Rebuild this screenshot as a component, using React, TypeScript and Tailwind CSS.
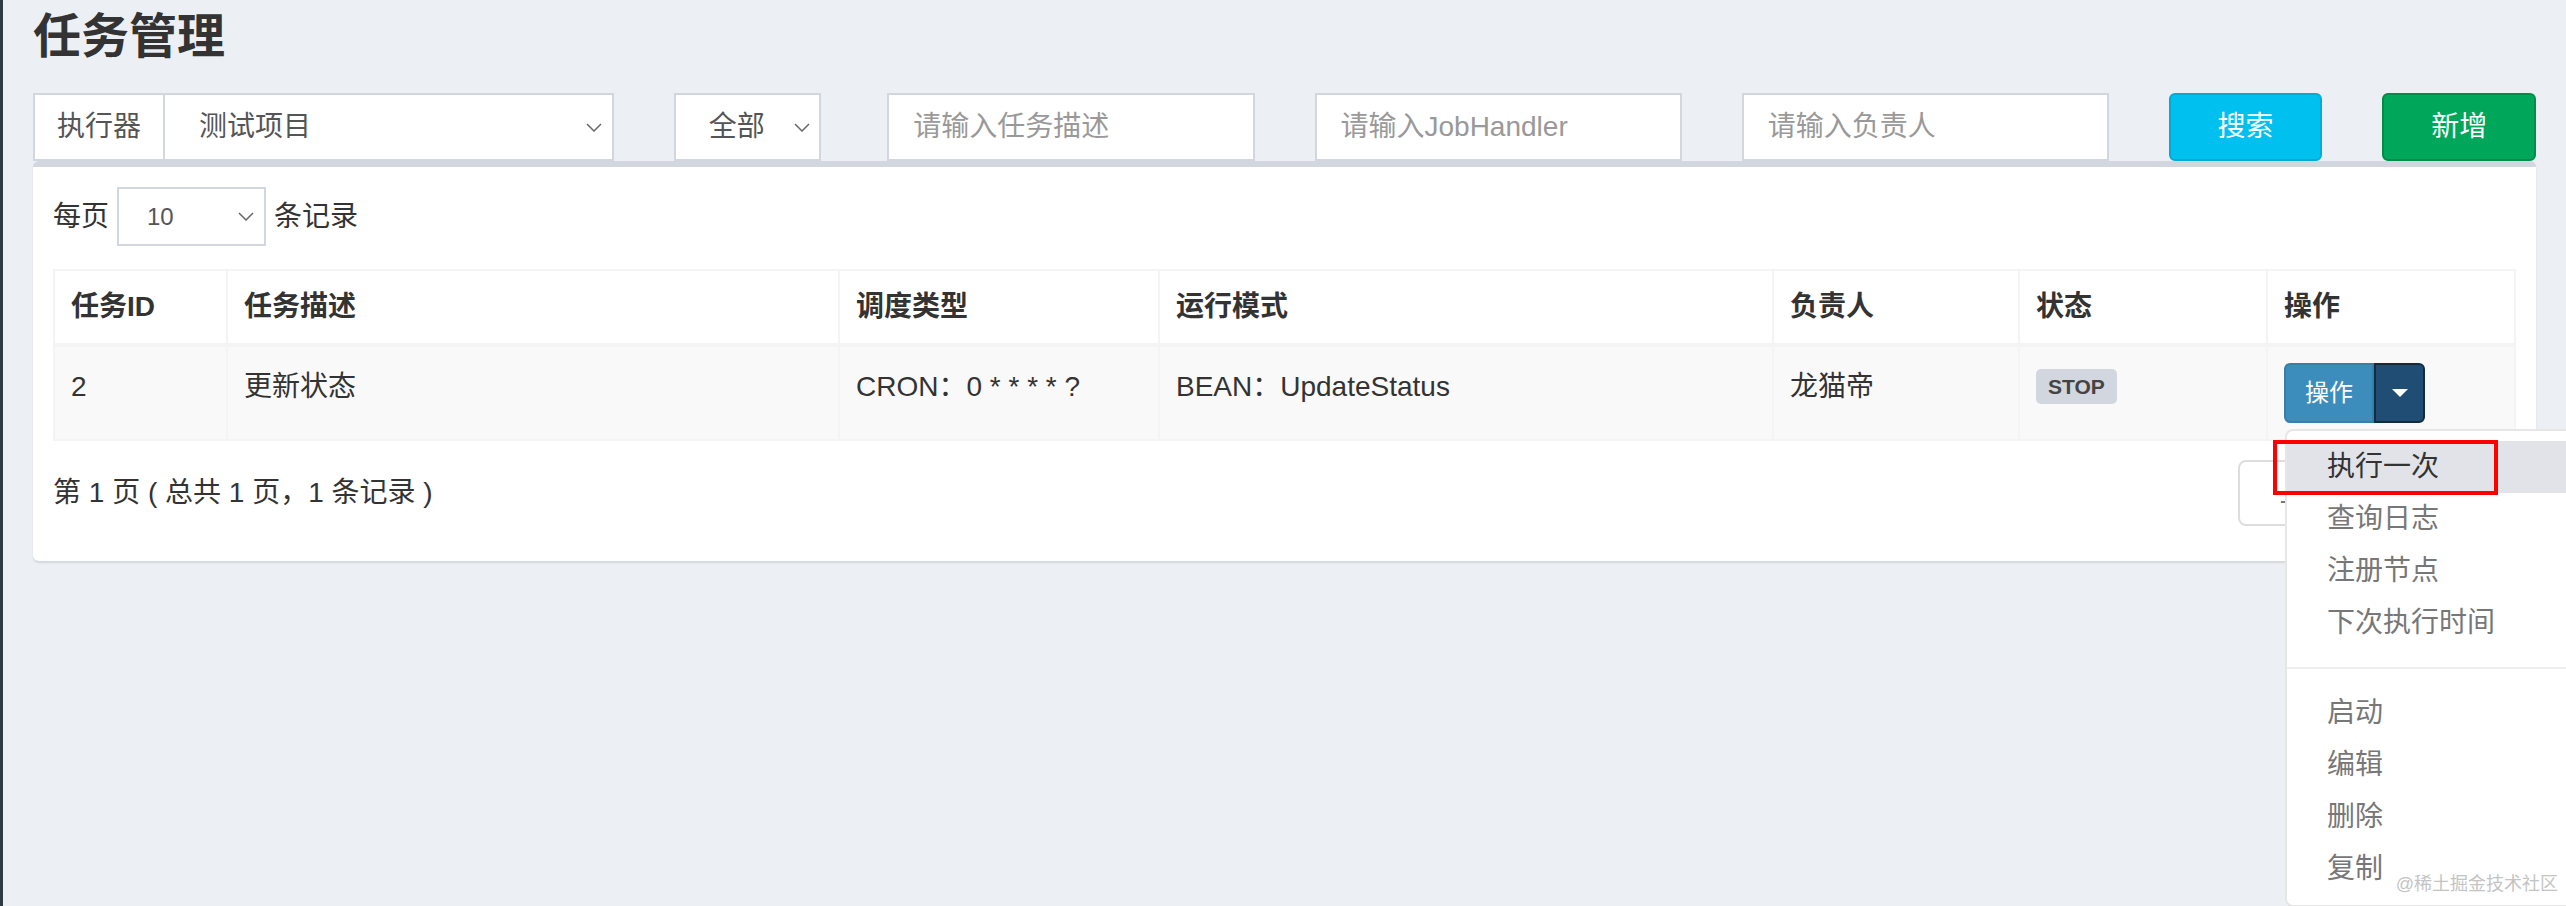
import React from 'react';

const columns = [
  { title: '任务ID', width: 'w-[173px]' },
  { title: '任务描述', width: 'w-[612px]' },
  { title: '调度类型', width: 'w-[320px]' },
  { title: '运行模式', width: 'w-[614px]' },
  { title: '负责人', width: 'w-[246px]' },
  { title: '状态', width: 'w-[248px]' },
  { title: '操作', width: 'w-[248px]' },
];

const menuTop = ['执行一次', '查询日志', '注册节点', '下次执行时间'];
const menuBottom = ['启动', '编辑', '删除', '复制'];

function Chevron() {
  return (
    <svg width="16" height="9" viewBox="0 0 16 9" className="shrink-0">
      <path d="M1 1 L8 8 L15 1" fill="none" stroke="#666" strokeWidth="1.5" />
    </svg>
  );
}

export default function App() {
  return (
    <div className="relative flex h-[906px] w-[2566px] overflow-hidden bg-[#ecf0f5] font-['Liberation_Sans','Noto_Sans_CJK_SC',sans-serif] text-[28px] text-[#333]">
      {/* sidebar edge */}
      <div className="w-[3px] shrink-0 bg-[#2f3a42]" />

      <div className="min-w-0 flex-1">
        <h1 className="pl-[30px] pt-[10px] text-[48px] font-semibold leading-[53px] text-[#333]">任务管理</h1>

        <section className="mt-[30px] px-[30px]">
          {/* Filters */}
          <div className="grid grid-cols-12 gap-x-[60px]">
            <div className="col-span-3 flex h-[68px]">
              <div className="flex w-[132px] shrink-0 items-center justify-center border-2 border-[#d2d6de] bg-white text-[#555]">执行器</div>
              <div className="flex flex-1 items-center justify-between border-2 border-l-0 border-[#d2d6de] bg-white pl-[34px] pr-[10px] text-[#555]">
                <span>测试项目</span>
                <Chevron />
              </div>
            </div>
            <div className="col-span-1">
              <div className="flex h-[68px] w-[147px] items-center justify-between border-2 border-[#d2d6de] bg-white pl-[33px] pr-[9px] text-[#555]">
                <span>全部</span>
                <Chevron />
              </div>
            </div>
            <div className="col-span-2 flex h-[68px] items-center border-2 border-[#d2d6de] bg-white px-[24px] text-[#999]">请输入任务描述</div>
            <div className="col-span-2 flex h-[68px] items-center border-2 border-[#d2d6de] bg-white px-[24px] text-[#999]">请输入JobHandler</div>
            <div className="col-span-2 flex h-[68px] items-center border-2 border-[#d2d6de] bg-white px-[24px] text-[#999]">请输入负责人</div>
            <button className="col-span-1 h-[68px] rounded-[6px] border-2 border-[#00acd6] bg-[#00c0ef] text-white">搜索</button>
            <button className="col-span-1 h-[68px] rounded-[6px] border-2 border-[#008d4c] bg-[#00a65a] text-white">新增</button>
          </div>

          {/* Box */}
          <div className="rounded-[6px] border-t-[6px] border-[#d2d6de] bg-white px-[20px] pb-[35px] pt-[20px] shadow-[0_2px_2px_rgba(0,0,0,0.1)]">
            <div className="flex h-[59px] items-center">
              <span>每页</span>
              <div className="mx-[8px] flex h-[59px] w-[149px] items-center justify-between border-2 border-[#d2d6de] pl-[28px] pr-[10px] text-[24px] text-[#555]">
                <span>10</span>
                <Chevron />
              </div>
              <span>条记录</span>
            </div>

            <table className="mt-[23px] w-full table-fixed border-collapse border-2 border-[#f4f4f4]">
              <thead>
                <tr>
                  {columns.map((c) => (
                    <th key={c.title} className={`${c.width} border-2 border-b-4 border-[#f4f4f4] p-[16px] text-left font-bold leading-[40px]`}>
                      {c.title}
                    </th>
                  ))}
                </tr>
              </thead>
              <tbody>
                <tr className="bg-[#f9f9f9]">
                  <td className="border-2 border-[#f4f4f4] px-[16px] pb-[16px] pt-[20px] align-top leading-[40px]">2</td>
                  <td className="border-2 border-[#f4f4f4] px-[16px] pb-[16px] pt-[20px] align-top leading-[40px]">更新状态</td>
                  <td className="border-2 border-[#f4f4f4] px-[16px] pb-[16px] pt-[20px] align-top leading-[40px]">CRON：0 * * * * ?</td>
                  <td className="border-2 border-[#f4f4f4] px-[16px] pb-[16px] pt-[20px] align-top leading-[40px]">BEAN：UpdateStatus</td>
                  <td className="border-2 border-[#f4f4f4] px-[16px] pb-[16px] pt-[20px] align-top leading-[40px]">龙猫帝</td>
                  <td className="border-2 border-[#f4f4f4] p-[16px] align-top leading-[40px]">
                    <span className="mt-[6px] inline-flex h-[35px] items-center rounded-[5px] bg-[#d2d6de] px-[12px] text-[21px] font-bold leading-none text-[#444]">STOP</span>
                  </td>
                  <td className="border-2 border-[#f4f4f4] p-[16px] align-top leading-[40px]">
                    <div className="relative inline-flex">
                      <button className="h-[60px] rounded-l-[6px] border-2 border-[#367fa9] bg-[#3c8dbc] px-[19px] text-[24px] text-white">操作</button>
                      <button className="flex h-[60px] w-[51px] items-center justify-center rounded-r-[6px] border-2 border-[#122b40] bg-[#204d74]">
                        <span className="h-0 w-0 border-x-8 border-t-8 border-x-transparent border-t-white" />
                      </button>

                      {/* dropdown menu */}
                      <div className="absolute left-[1px] top-full z-10 mt-[6px] w-[320px] rounded-[8px] border-2 border-[#e6e6e6] bg-white py-[10px] text-left">
                        {menuTop.map((m, i) => (
                          <div key={m} className={`px-[40px] py-[6px] leading-[40px] ${i === 0 ? 'bg-[#e1e3e9] text-[#333]' : 'text-[#777]'}`}>{m}</div>
                        ))}
                        <div className="my-[18px] h-[2px] bg-[#eee]" />
                        {menuBottom.map((m) => (
                          <div key={m} className="px-[40px] py-[6px] leading-[40px] text-[#777]">{m}</div>
                        ))}
                        {/* annotation */}
                        <div className="absolute left-[-14px] top-[9px] h-[55px] w-[225px] border-4 border-[#ff0000]" />
                      </div>
                    </div>
                  </td>
                </tr>
              </tbody>
            </table>

            <div className="mt-[19px] flex h-[66px] items-center justify-between">
              <span>第 1 页 ( 总共 1 页，1 条记录 )</span>
              <div className="flex h-[66px]">
                <div className="flex w-[139px] items-center justify-center rounded-l-[8px] border-2 border-[#ddd] text-[#777]">上页</div>
                <div className="flex w-[139px] items-center justify-center rounded-r-[8px] border-2 border-l-0 border-[#ddd] text-[#777]">下页</div>
              </div>
            </div>
          </div>
        </section>
      </div>

      <div className="absolute bottom-[8px] right-[8px] z-20 text-[18px] text-[#c4c4c4]">@稀土掘金技术社区</div>
    </div>
  );
}
